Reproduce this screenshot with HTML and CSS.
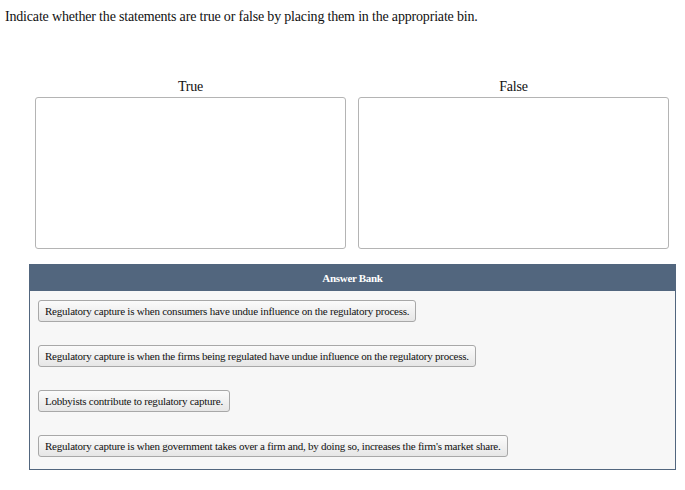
FILE: index.html
```html
<!DOCTYPE html>
<html>
<head>
<meta charset="utf-8">
<link rel="stylesheet" href="styles.css">
</head>
<body>
<p class="prompt">Indicate whether the statements are true or false by placing them in the appropriate bin.</p>
<div class="bins">
  <div class="bin">
    <div class="bin-label">True</div>
    <div class="bin-box"></div>
  </div>
  <div class="bin">
    <div class="bin-label">False</div>
    <div class="bin-box"></div>
  </div>
</div>
<div class="bank">
  <div class="bank-head">Answer Bank</div>
  <div class="bank-body">
    <div class="item">Regulatory capture is when consumers have undue influence on the regulatory process.</div>
    <div class="item">Regulatory capture is when the firms being regulated have undue influence on the regulatory process.</div>
    <div class="item">Lobbyists contribute to regulatory capture.</div>
    <div class="item">Regulatory capture is when government takes over a firm and, by doing so, increases the firm's market share.</div>
  </div>
</div>
</body>
</html>
```
FILE: styles.css
```css
html, body {
  margin: 0;
  padding: 0;
  background: #ffffff;
}
body {
  font-family: "Liberation Serif", "Times New Roman", serif;
  color: #111;
}
.prompt {
  margin: 0;
  padding: 9px 0 0 5px;
  font-size: 14px;
  line-height: 16px;
  letter-spacing: -0.18px;
}
.bins {
  display: flex;
  gap: 12px;
  margin: 54px 0 0 35px;
  width: 634px;
}
.bin {
  flex: 1;
  display: flex;
  flex-direction: column;
  align-items: stretch;
}
.bin-label {
  text-align: center;
  font-size: 14px;
  line-height: 16px;
  letter-spacing: -0.2px;
  margin-bottom: 2px;
}
.bin-box {
  height: 150px;
  border: 1px solid #b4b4b4;
  border-radius: 3px;
  background: #fff;
}
.bank {
  margin: 15px 0 0 29px;
  width: 647px;
  border: 1px solid #52667e;
  box-sizing: border-box;
}
.bank-head {
  background: #52667e;
  color: #fff;
  text-align: center;
  font-size: 11px;
  line-height: 26px;
  letter-spacing: -0.3px;
  font-weight: bold;
}
.bank-body {
  background: #f7f7f7;
  padding: 9px 8px 12px 8px;
  display: flex;
  flex-direction: column;
  align-items: flex-start;
  gap: 23px;
}
.item {
  font-size: 11px;
  line-height: 20px;
  letter-spacing: -0.23px;
  padding: 0 6px;
  border: 1px solid #a8a8a8;
  border-radius: 3px;
  background: linear-gradient(#fbfbfb, #e6e6e6);
  color: #111;
}
```
